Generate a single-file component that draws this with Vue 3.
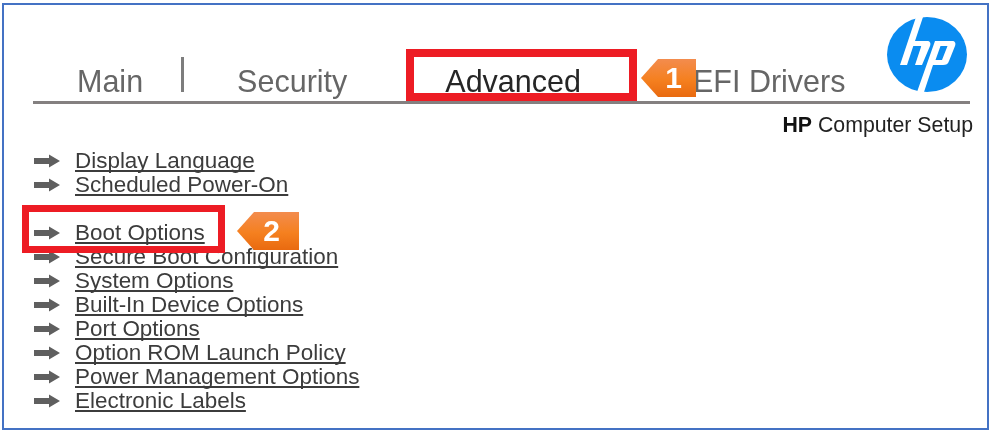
<script setup>
const tabs = [
  { label: 'Main', cls: 'main' },
  { label: 'Security', cls: 'security' },
  { label: 'Advanced', cls: 'advanced' },
  { label: 'EFI Drivers', cls: 'efi' }
]
const first = ['Display Language', 'Scheduled Power-On']
const second = [
  'Boot Options',
  'Secure Boot Configuration',
  'System Options',
  'Built-In Device Options',
  'Port Options',
  'Option ROM Launch Policy',
  'Power Management Options',
  'Electronic Labels'
]
const groups = [first, second]
</script>

<template>
  <div class="frame">
    <header class="head">
      <nav class="tabs">
        <span v-for="t in tabs" :key="t.label" class="tab" :class="t.cls">{{ t.label }}</span>
      </nav>
      <svg class="logo" viewBox="0 0 80 75" aria-label="HP logo">
        <ellipse cx="40" cy="37.5" rx="40" ry="37.5" fill="#0a8cf0" />
        <path fill="#fff" d="M29 0L36 0L28 24L40 24C43 24 44 26 43 29L35 48L28 48L34 30C34.5 29 34 29 33 29L26.3 29L20 48L13 48Z" />
        <path fill="#fff" fill-rule="evenodd" d="M48 24L65 24C68 24 69 26 68 29L62 44C61 47 59 48 56 48L46 48L37 75L30 75ZM53.5 29L48.5 43L55 43L60.5 29Z" />
      </svg>
    </header>
    <p class="title"><b>HP</b> Computer Setup</p>
    <div class="menu">
      <ul v-for="(g, i) in groups" :key="i" class="group">
        <li v-for="item in g" :key="item" class="row">
          <svg class="arrow" viewBox="0 0 26 14"><path fill="#5f5f5f" d="M0 4H15V0.5L26 7 15 13.5V10H0Z" /></svg>
          <a class="link">{{ item }}</a>
        </li>
      </ul>
    </div>

    <div class="mark mark-a"></div>
    <div class="mark mark-b"></div>
    <div class="flag flag-a">1</div>
    <div class="flag flag-b">2</div>
  </div>
</template>

<style>
html, body { margin: 0; background: #fff; }
</style>

<style scoped>
.frame {
  position: relative;
  box-sizing: border-box;
  width: 987px;
  height: 427px;
  margin: 3px 0 0 2px;
  border: 2px solid #4472c4;
  background: #fff;
  font-family: "Liberation Sans", Arial, sans-serif;
  color: #333;
  filter: blur(0.35px);
}
.head {
  position: relative;
  box-sizing: border-box;
  width: 937px;
  height: 99px;
  margin-left: 29px;
  border-bottom: 3px solid #848080;
}
.tabs {
  display: flex;
  align-items: flex-end;
  height: 96px;
  padding-left: 44px;
}
.tab {
  font-size: 30.5px;
  line-height: 38px;
  color: #666;
  white-space: nowrap;
  margin-bottom: 1px;
}
.main { padding-right: 41px; position: relative; }
.main::after {
  content: "";
  position: absolute;
  right: 0;
  top: -5px;
  width: 3px;
  height: 35px;
  background: #7d7d7d;
}
.security { margin-left: 53px; }
.advanced { margin-left: 98px; color: #262626; }
.efi { margin-left: 112px; }
.logo {
  position: absolute;
  left: 854px;
  top: 12px;
  width: 80px;
  height: 75px;
}
.title {
  margin: 10px 0 0;
  padding-right: 14px;
  text-align: right;
  font-size: 21.3px;
  line-height: 22px;
  color: #222;
}
.title b { color: #111; }
.menu {
  display: flex;
  flex-direction: column;
  gap: 24px;
  margin: 13px 0 0 30px;
}
.group { list-style: none; margin: 0; padding: 0; }
.row {
  display: flex;
  align-items: center;
  height: 24px;
}
.arrow { width: 26px; height: 14px; flex: none; margin-right: 15px; }
.link {
  font-size: 22.45px;
  line-height: 24px;
  color: #3c3c3c;
  text-decoration: underline;
  text-decoration-thickness: 2px;
  text-decoration-skip-ink: none;
  text-underline-offset: 2px;
  white-space: nowrap;
}
.mark {
  position: absolute;
  box-sizing: border-box;
  border: 8px solid #ed1c24;
}
.mark-a { left: 402px; top: 44px; width: 231px; height: 52px; }
.mark-b { left: 18px; top: 200px; width: 203px; height: 48px; border-width: 7px; }
.flag {
  position: absolute;
  display: flex;
  align-items: center;
  justify-content: flex-end;
  box-sizing: border-box;
  color: #fff;
  font-weight: 700;
  font-size: 30px;
  background: linear-gradient(#f38c4e, #f5801f 55%, #e96a10);
  clip-path: polygon(0 50%, 17px 0, 100% 0, 100% 100%, 17px 100%);
}
.flag-a { left: 637px; top: 54px; width: 55px; height: 38px; padding-right: 14px; }
.flag-b { left: 233px; top: 207px; width: 62px; height: 38px; padding-right: 19px; }
</style>
